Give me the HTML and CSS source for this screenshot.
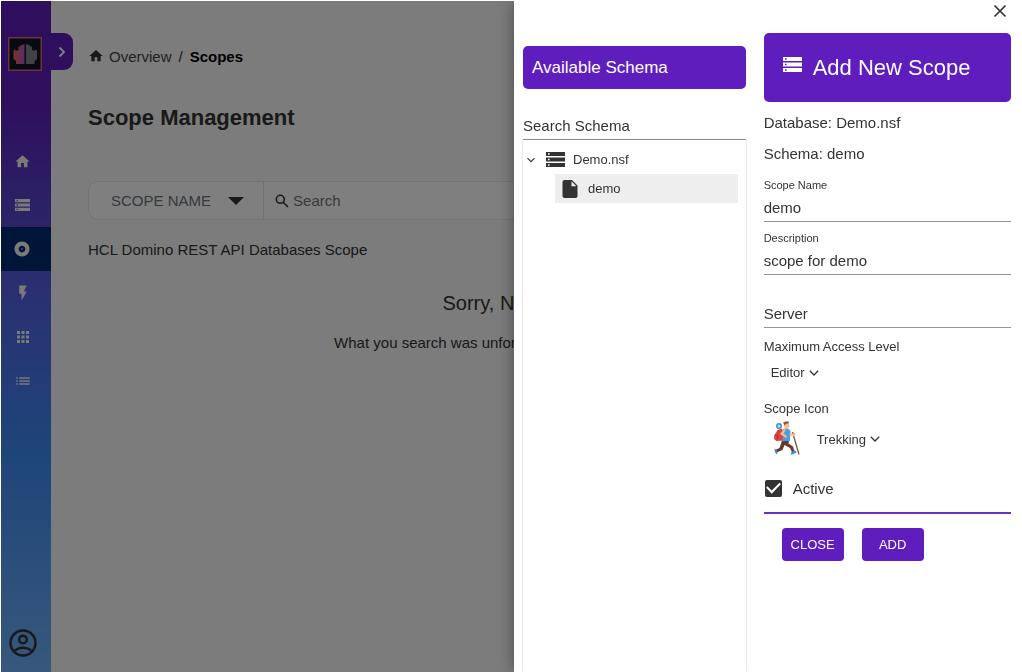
FILE: index.html
```html
<!DOCTYPE html>
<html lang="en">
<head>
<meta charset="utf-8">
<meta name="viewport" content="width=device-width, initial-scale=1">
<title>Scope Management</title>
<link rel="stylesheet" href="styles.css">
</head>
<body>
<svg class="symbols" width="0" height="0" aria-hidden="true">
  <symbol id="home" viewBox="0 0 24 24"><path d="M10 20v-6h4v6h5v-8h3L12 3 2 12h3v8z"/></symbol>
  <symbol id="storage" viewBox="0 0 19 15"><path fill-rule="evenodd" d="M0 0h19v4H0zM2 1.200v1.600h1.600V1.200zM0 5.500h19v4H0zM2 6.700v1.600h1.600V6.700zM0 11h19v4H0zM2 12.200v1.600h1.600v-1.600z"/></symbol>
  <symbol id="chevron" viewBox="0 0 10 10"><path d="M1.500 3.200 5 6.700 8.500 3.200" fill="none" stroke="currentColor" stroke-width="1.100"/></symbol>
</svg>

<div class="app">
  <nav class="sidebar" aria-label="Main">
    <div class="brand">
      <a class="logo" href="#" aria-label="Domino REST API">
        <svg viewBox="0 0 34 34" width="34" height="34">
          <defs><linearGradient id="warm" x1="0" x2="1"><stop offset="0" stop-color="#e8675c"/><stop offset="1" stop-color="#b45ccb"/></linearGradient></defs>
          <rect x=".75" y=".75" width="32.500" height="32.500" fill="#10141f" stroke="#d46a70" stroke-width="1.500"/>
          <path fill="url(#warm)" d="M16.500 7v20H8v-3l-2.500-2v-8.500l1.500-1 1 1.500 2.500-1V10l1-1 .8 1.500V8.500z"/>
          <path fill="#80858f" d="M18 7v20h8.500v-3l2.500-2v-8.500l-1.500-1-1 1.500-2.500-1V10l-1-1-.8 1.500V8.500z"/>
        </svg>
      </a>
      <button class="expand" type="button" aria-label="Expand menu">
        <svg viewBox="0 0 12 12" width="12" height="12" fill="none"><path d="M3.500 1.500 8 6 3.500 10.500" stroke="currentColor" stroke-width="1.800"/></svg>
      </button>
    </div>
    <ul class="menu">
      <li><a href="#" aria-label="Overview"><svg width="17" height="17"><use href="#home"/></svg></a></li>
      <li><a href="#" aria-label="Schemas"><svg width="15" height="12"><use href="#storage"/></svg></a></li>
      <li><a class="current" href="#" aria-label="Scopes" aria-current="page"><svg viewBox="0 0 24 24" width="18" height="18"><path d="M12 2C6.480 2 2 6.480 2 12s4.480 10 10 10 10-4.480 10-10S17.520 2 12 2zm0 14.500c-2.490 0-4.500-2.010-4.500-4.500S9.510 7.500 12 7.500s4.500 2.010 4.500 4.500-2.010 4.500-4.500 4.500zm0-5.500c-.55 0-1 .45-1 1s.45 1 1 1 1-.45 1-1-.45-1-1-1z"/></svg></a></li>
      <li><a href="#" aria-label="Applications"><svg viewBox="0 0 24 24" width="18" height="18"><path d="M7 2v11h3v9l7-12h-4l4-8z"/></svg></a></li>
      <li><a href="#" aria-label="Groups"><svg viewBox="0 0 24 24" width="18" height="18"><path d="M4 8h4V4H4zm6 12h4v-4h-4zm-6 0h4v-4H4zm0-6h4v-4H4zm6 0h4v-4h-4zm6-10v4h4V4zm-6 4h4V4h-4zm6 6h4v-4h-4zm0 6h4v-4h-4z"/></svg></a></li>
      <li><a href="#" aria-label="Lists"><svg viewBox="0 0 24 24" width="18" height="18"><path d="M3 13h2v-2H3zm0 4h2v-2H3zm0-8h2V7H3zm4 4h14v-2H7zm0 4h14v-2H7zM7 7v2h14V7z"/></svg></a></li>
    </ul>
    <button class="account" type="button" aria-label="Account">
      <svg viewBox="0 0 28 28" width="28" height="28" fill="none" stroke="currentColor" stroke-width="2.500"><circle cx="14" cy="14" r="12.500"/><circle cx="14" cy="10.500" r="3.800"/><path d="M5.500 22c4-4.500 13-4.500 17 0"/></svg>
    </button>
  </nav>

  <main class="content">
    <nav class="crumbs" aria-label="Breadcrumb">
      <svg width="16" height="16"><use href="#home"/></svg>
      <a href="#">Overview</a><span>/</span><strong>Scopes</strong>
    </nav>
    <h1>Scope Management</h1>
    <div class="searchbar">
      <button class="filter" type="button">SCOPE NAME
        <svg viewBox="0 0 16 8" width="16" height="8"><path d="M0 0h16L8 8z"/></svg>
      </button>
      <label class="search">
        <svg viewBox="0 0 14 14" width="14" height="14" fill="none" stroke="currentColor" stroke-width="1.600"><circle cx="5.300" cy="5.300" r="4"/><path d="m8.200 8.200 4.800 4.800"/></svg>
        <input type="search" placeholder="Search" aria-label="Search">
      </label>
    </div>
    <p class="lead">HCL Domino REST API Databases Scope</p>
    <section class="empty">
      <h2>Sorry, No result found</h2>
      <p>What you search was unfortunately not found or doesn't exist.</p>
    </section>
  </main>
</div>

<div class="backdrop">
  <aside class="drawer" role="dialog" aria-label="Add New Scope">
    <button class="dismiss" type="button" aria-label="Close">
      <svg viewBox="0 0 14 14" width="14" height="14"><path d="m1.500 1.500 11 11m0-11-11 11" stroke="currentColor" stroke-width="1.700"/></svg>
    </button>
    <section class="schemas">
      <h2 class="banner">Available Schema</h2>
      <input class="line-input" type="text" placeholder="Search Schema" aria-label="Search Schema">
      <ul class="tree">
        <li>
          <button class="node" type="button"><svg class="arrow" width="10" height="10"><use href="#chevron"/></svg><svg width="19" height="15"><use href="#storage"/></svg>Demo.nsf</button>
          <ul>
            <li><button class="node leaf" type="button"><svg viewBox="0 0 16 20" width="16" height="20"><path d="M2.500 1H10l5.500 5.500V17a2 2 0 0 1-2 2h-11a2 2 0 0 1-2-2V3a2 2 0 0 1 2-2z"/><path d="M9.500 2.300v4.900h4.900z" fill="#eee"/></svg>demo</button></li>
          </ul>
        </li>
      </ul>
    </section>
    <form class="scope">
      <h2 class="title"><svg width="19" height="15"><use href="#storage"/></svg>Add New Scope</h2>
      <p class="info">Database: Demo.nsf</p>
      <p class="info">Schema: demo</p>
      <div class="field"><label for="name">Scope Name</label><input class="line-input" id="name" type="text" value="demo"></div>
      <div class="field"><label for="desc">Description</label><input class="line-input" id="desc" type="text" value="scope for demo"></div>
      <div class="field bare"><input class="line-input" type="text" placeholder="Server" aria-label="Server"></div>
      <label class="caption" for="level">Maximum Access Level</label>
      <div class="pick level"><select id="level"><option>Editor</option></select><svg width="12" height="12"><use href="#chevron"/></svg></div>
      <label class="caption" for="icon">Scope Icon</label>
      <div class="pick icon">
        <svg class="hiker" viewBox="0 0 28 36" width="28" height="36" aria-hidden="true">
          <path d="m19.500 11 6.500 22.500" stroke="#8a5136" stroke-width="1.300"/>
          <path d="M9 19.500h7l-.5 3 4.500 3 1.500 5-2.500.8-2-4.300-5.500-3-2 5-6 2.500-1.500-2.500 4.500-2z" fill="#623b2a"/>
          <path d="m1.500 27.500 2 1.500 1 2.800-.5 1.700C2 32 1.300 30 1.500 27.500zM18.500 31l3-1.500 1.500.5.500 1.500-4 2h-2z" fill="#3b91d6"/>
          <path d="m10 8 4.500-1 3 3-.5 10H8.500z" fill="#4a9edb"/>
          <path d="M4.500 9 9 7.500 10.500 12l-1 7.500-6 .5L1 18l.5-4z" fill="#d9443f"/>
          <path d="M1.500 14.500h3v4" fill="none" stroke="#a82e34"/>
          <circle cx="6" cy="5" r="2.300" fill="#b8def5" stroke="#3b91d6" stroke-width="1.400"/>
          <path d="m11 8-4 5 6 4 1.300-1.500-3.800-3 2.500-4zM17 11.500l3.500 1.500 1-1.500 1 1-1 3-5-1.500zM11.500 2h4l1 3-2 3h-3z" fill="#f5bd96"/>
          <path d="M10 1.500 12.500.5h3.300v1.800L12.500 3 11.800 5z" fill="#985332"/>
        </svg>
        <select id="icon"><option>Trekking</option></select><svg width="12" height="12"><use href="#chevron"/></svg>
      </div>
      <label class="active"><input type="checkbox" checked>Active</label>
      <div class="actions"><button type="button">CLOSE</button><button type="submit">ADD</button></div>
    </form>
  </aside>
</div>
</body>
</html>
```
FILE: styles.css
```css
* { box-sizing: border-box; }
body, h1, h2, p, ul { margin: 0; padding: 0; }
ul { list-style: none; }
body, button, input, select { font-family: "Liberation Sans", Arial, sans-serif; font-size: 15px; color: #333; }
button, input, select { border: 0; background: none; padding: 0; margin: 0; }
svg { flex: none; }
svg:not([fill]) { fill: currentColor; }
.symbols { position: absolute; }
body { background: #fff; }

.app { display: flex; height: 100vh; padding: 1px 0 0 1px; }
.sidebar {
  flex: 0 0 50px;
  min-width: 0;
  display: flex;
  flex-direction: column;
  background: linear-gradient(#5e1dbc 0, #5e1dbc 15%, #564bd0 34%, #5560e4 43%, #3c8af4 67%, #70b0f8 100%);
  color: #fff;
}
.brand { position: relative; z-index: 1; display: flex; align-items: flex-start; padding: 32px 0 0 7px; height: 69px; }
.logo { display: block; flex: none; height: 34px; margin: 4px 9px 0 0; }
.expand { flex: 0 0 22px; height: 37px; border-radius: 0 9px 9px 0; background: #5e1dbc; color: #fff; display: grid; place-items: center; }
.menu { margin-top: 69px; }
.menu a { display: grid; place-items: center; height: 44px; padding-right: 7px; color: #f4f4f4; }
.menu .current { background: #002c72; padding-right: 9px; }
.account { margin: auto auto 15px 8px; height: 28px; color: #333; }

.content { flex: 1; min-width: 0; padding: 45px 32px 0 37px; background: #f8f8f8; }
.crumbs { display: flex; align-items: center; height: 20px; }
.crumbs a { color: #444; text-decoration: none; margin: 0 7px 0 5px; }
.crumbs strong { color: #000; margin-left: 7px; }
h1 { font-size: 22px; line-height: 28px; margin-top: 38px; }
.searchbar { display: flex; height: 39px; margin-top: 49px; background: #fff; border: 1px solid #e6e6e6; border-radius: 10px; }
.filter { display: flex; align-items: center; gap: 17px; padding: 0 19px 0 22px; border-right: 1px solid #e0e0e0; color: #6a727c; }
.filter svg { color: #333; }
.search { flex: 1; display: flex; align-items: center; gap: 4px; padding-left: 11px; }
.search input { flex: 1; }
.search input::placeholder { color: #757575; }
.lead { margin-top: 20px; line-height: 20px; }
.empty { margin-top: 30px; text-align: center; }
.empty h2 { font-size: 20px; font-weight: 400; line-height: 26px; }
.empty p { line-height: 20px; margin-top: 17px; }

.backdrop { position: fixed; z-index: 2; inset: 1px 0 0 1px; display: flex; justify-content: flex-end; overflow: hidden; background: rgba(0, 0, 0, .5); }
.drawer {
  position: relative;
  flex: 0 1 508px;
  display: grid;
  grid-template-columns: 9fr 10fr;
  gap: 18px;
  padding: 0 11px 0 9px;
  background: #fff;
  box-shadow: 0 0 16px rgba(0, 0, 0, .4);
}
.dismiss { position: absolute; top: 3px; right: 15px; height: 14px; }
.line-input { display: block; width: 100%; height: 28px; border-bottom: 1px solid #949494; border-radius: 0; }
.line-input::placeholder { color: #333; opacity: 1; }

.schemas { display: flex; flex-direction: column; padding-top: 45px; }
.banner { background: #5e1dbc; color: #fff; font-size: 17px; font-weight: 400; line-height: 43px; padding-left: 9px; border-radius: 5px; margin-bottom: 23px; }
.tree { flex: 1; padding: 5px 8px 0 3px; box-shadow: 0 0 2px rgba(0, 0, 0, .25); }
.node { display: flex; align-items: center; width: 100%; height: 29px; font-size: 13px; text-align: left; }
.node svg { margin-right: 8px; }
.node .arrow { margin-right: 10px; }
.leaf { background: #eee; padding-left: 7px; }
.leaf svg { margin-right: 10px; }
.tree ul { margin-left: 29px; }

.scope { padding-top: 32px; }
.title { display: flex; align-items: center; gap: 11px; height: 69px; padding-left: 19px; background: #5e1dbc; color: #fff; border-radius: 5px; font-size: 22px; font-weight: 400; margin-bottom: 5px; }
.title svg { margin-bottom: 6px; }
.info { line-height: 31px; }
.field { height: 53px; padding-top: 9px; }
.field label { display: block; font-size: 11px; line-height: 14px; }
.field .line-input { margin-top: 2px; }
.bare { padding-top: 23px; }
.caption { display: block; font-size: 13px; line-height: 16px; margin-top: 11px; }
.pick { display: flex; align-items: center; }
.pick select { appearance: none; field-sizing: content; font-size: 13px; }
.pick select + svg { margin-left: 3px; pointer-events: none; }
.level { height: 35px; padding-left: 7px; }
.icon { height: 44px; padding-left: 9px; }
.hiker { margin-right: 16px; }
.active { display: flex; align-items: center; gap: 11px; height: 20px; margin: 17px 0 14px; }
.active input { appearance: none; width: 17px; height: 17px; margin-left: 1px; border-radius: 2px; background: #333; display: grid; place-items: center; }
.active input:checked::before { content: ""; width: 11px; height: 6px; margin-bottom: 4px; border: solid #fff; border-width: 0 0 2px 2px; rotate: -45deg; }
.actions { display: flex; gap: 18px; border-top: 2px solid #6a30c4; padding: 14px 18px; }
.actions button { width: 62px; height: 33px; border-radius: 4px; background: #5e1dbc; color: #fff; font-size: 13px; }
```
